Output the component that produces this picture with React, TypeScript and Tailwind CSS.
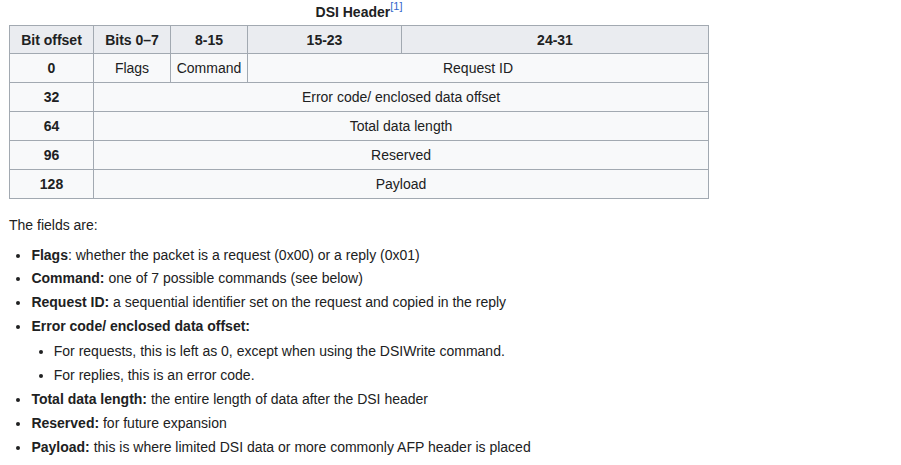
const rows = [
  { off: '0', cells: null },
  { off: '32', text: 'Error code/ enclosed data offset' },
  { off: '64', text: 'Total data length' },
  { off: '96', text: 'Reserved' },
  { off: '128', text: 'Payload' },
];

const th = 'border border-[#a2a9b1] bg-[#eaecf0] px-[5.6px] py-[2.3px] font-bold text-center';
const td = 'border border-[#a2a9b1] bg-[#f8f9fa] px-[5.6px] py-[2.8px] text-center font-normal';

const fields = [
  { label: 'Flags', text: ': whether the packet is a request (0x00) or a reply (0x01)' },
  { label: 'Command:', text: ' one of 7 possible commands (see below)' },
  { label: 'Request ID:', text: ' a sequential identifier set on the request and copied in the reply' },
];

const App = () => {
  return (
    <div className="min-h-[465px] bg-white px-[9px] pt-[1px] text-[14px] leading-[1.6] text-[#202122] font-['Liberation_Sans',Arial,sans-serif]">
      {/* DSI header table */}
      <table className="border-collapse w-[700px] table-fixed mb-[15px]">
        <caption className="font-bold text-center pb-[2px]">
          DSI Header
          <sup className="relative -top-[7px] align-baseline font-normal text-[#3366cc] text-[11px] leading-none">[1]</sup>
        </caption>
        <colgroup>
          <col className="w-[84px]" />
          <col className="w-[77px]" />
          <col className="w-[77px]" />
          <col className="w-[154px]" />
          <col />
        </colgroup>
        <thead>
          <tr>
            <th className={th}>Bit offset</th>
            <th className={th}>Bits 0–7</th>
            <th className={th}>8-15</th>
            <th className={th}>15-23</th>
            <th className={th}>24-31</th>
          </tr>
        </thead>
        <tbody>
          {rows.map((r) => (
            <tr key={r.off}>
              <th className={`${td} !font-bold`}>{r.off}</th>
              {r.cells === null ? (
                <>
                  <td className={td}>Flags</td>
                  <td className={td}>Command</td>
                  <td className={td} colSpan={2}>Request ID</td>
                </>
              ) : (
                <td className={td} colSpan={4}>{r.text}</td>
              )}
            </tr>
          ))}
        </tbody>
      </table>

      <p className="mb-[7px]">The fields are:</p>

      <ul className="list-disc ml-[22.4px]">
        {fields.map((f) => (
          <li key={f.label} className="mb-[1.4px]">
            <b>{f.label}</b>{f.text}
          </li>
        ))}
        <li className="mb-[1.4px]">
          <b>Error code/ enclosed data offset:</b>
          <ul className="list-disc ml-[22.4px] mt-[3px]">
            <li className="mb-[1.4px]">For requests, this is left as 0, except when using the DSIWrite command.</li>
            <li className="mb-[1.4px]">For replies, this is an error code.</li>
          </ul>
        </li>
        <li className="mb-[1.4px]"><b>Total data length:</b> the entire length of data after the DSI header</li>
        <li className="mb-[1.4px]"><b>Reserved:</b> for future expansion</li>
        <li className="mb-[1.4px]"><b>Payload:</b> this is where limited DSI data or more commonly AFP header is placed</li>
      </ul>
    </div>
  );
};

export default App;
